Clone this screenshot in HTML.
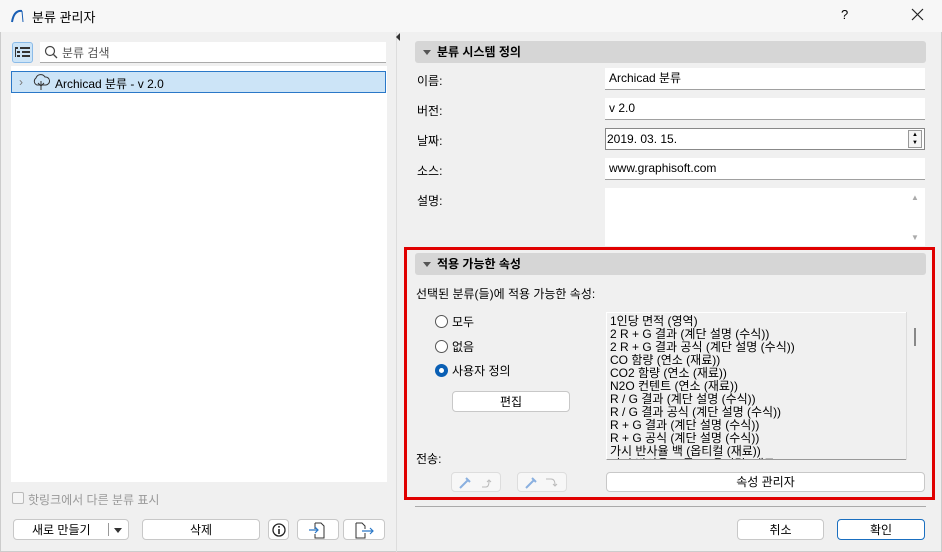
<!DOCTYPE html>
<html><head><meta charset="utf-8"><style>
*{box-sizing:border-box;margin:0;padding:0}
body{width:942px;height:552px;background:#f0f0f0;font-family:"Liberation Sans","Noto Sans CJK KR",sans-serif;font-size:12px;color:#000;position:relative;overflow:hidden}
.a{position:absolute}
.btn{position:absolute;background:#fff;border:1px solid #c8c8c8;border-radius:4px;text-align:center;line-height:20px;font-size:12px}
.inp{position:absolute;background:#fff;border-bottom:1px solid #a0a0a0;height:22px;line-height:21px;padding-left:4px;font-size:12px}
.hdr{position:absolute;background:#d6d6d6;border-radius:3px;height:22px;line-height:22px;font-weight:bold;padding-left:22px;font-size:12px}
.hdr:before{content:"";position:absolute;left:8px;top:9px;border-left:4px solid transparent;border-right:4px solid transparent;border-top:5px solid #555}
.lbl{position:absolute;font-size:12px}
.rad{position:absolute;width:13px;height:13px;border:1px solid #555;border-radius:50%;background:#fff}
.list div{height:13px;line-height:13px;white-space:nowrap}
</style></head><body>
<div class="a" style="left:0;top:0;width:942px;height:32px;background:#f7f7f7"></div>
<svg class="a" style="left:10px;top:8px" width="16" height="16"><path d="M2 14 Q4 2 12 3" stroke="#1a5fb4" stroke-width="2" fill="none"/><path d="M12 3 L13 14" stroke="#1a5fb4" stroke-width="1" fill="none"/></svg>
<div class="a" style="left:32px;top:7px;font-size:13px">분류 관리자</div>
<div class="a" style="left:841px;top:7px;font-size:13px">?</div>
<svg class="a" style="left:911px;top:8px" width="13" height="13"><path d="M1 1L12 12M12 1L1 12" stroke="#222" stroke-width="1.2"/></svg>
<div class="a" style="left:0;top:32px;width:942px;height:520px;background:#f0f0f0;border:1px solid #ccc;border-top:none"></div>
<!-- left -->
<div class="a" style="left:12px;top:42px;width:21px;height:21px;border:1px solid #8bbbe8;background:#cce4f7;border-radius:3px"></div>
<svg class="a" style="left:14px;top:45px" width="17" height="15"><g fill="#333"><rect x="1" y="2" width="3" height="2"/><rect x="6" y="2" width="10" height="2"/><rect x="3" y="6" width="3" height="2"/><rect x="8" y="6" width="8" height="2"/><rect x="3" y="10" width="3" height="2"/><rect x="8" y="10" width="8" height="2"/><rect x="1" y="4" width="1" height="8"/></g></svg>
<div class="a" style="left:40px;top:42px;width:346px;height:21px;background:#fff;border-bottom:1px solid #aaa"></div>
<svg class="a" style="left:44px;top:45px" width="14" height="14"><circle cx="6" cy="6" r="4.5" stroke="#444" fill="none" stroke-width="1.2"/><path d="M9.5 9.5L13 13" stroke="#444" stroke-width="1.3"/></svg>
<div class="a" style="left:62px;top:44px;color:#555">분류 검색</div>
<div class="a" style="left:11px;top:66px;width:376px;height:416px;background:#fff"></div>
<div class="a" style="left:11px;top:71px;width:375px;height:22px;background:#cce4f7;border:1px solid #2a78c8"></div>
<div class="a" style="left:19px;top:75px;color:#777">›</div>
<svg class="a" style="left:32px;top:73px" width="18" height="18"><path d="M5 12 A4 4 0 0 1 4 5 A5 5 0 0 1 13 4 A4 4 0 0 1 14 12 Z M9 8V17 M6 10l3 3 3-3" stroke="#333" fill="none" stroke-width="1"/></svg>
<div class="a" style="left:55px;top:75px">Archicad 분류 - v 2.0</div>
<div class="a" style="left:12px;top:492px;width:12px;height:12px;border:1px solid #bbb;background:#f5f5f5;border-radius:2px"></div>
<div class="a" style="left:28px;top:491px;color:#999">핫링크에서 다른 분류 표시</div>
<div class="btn" style="left:13px;top:519px;width:116px;height:21px;text-align:left;padding-left:18px">새로 만들기</div>
<div class="a" style="left:108px;top:523px;width:1px;height:13px;background:#999"></div>
<div class="a" style="left:114px;top:528px;border-left:4px solid transparent;border-right:4px solid transparent;border-top:5px solid #333"></div>
<div class="btn" style="left:142px;top:519px;width:118px;height:21px">삭제</div>
<div class="btn" style="left:268px;top:519px;width:21px;height:21px"></div>
<svg class="a" style="left:272px;top:523px" width="14" height="14"><circle cx="7" cy="7" r="6" stroke="#222" fill="none" stroke-width="1.3"/><rect x="6.2" y="6" width="1.6" height="5" fill="#222"/><rect x="6.2" y="3" width="1.6" height="1.6" fill="#222"/></svg>
<div class="btn" style="left:297px;top:519px;width:42px;height:21px"></div>
<svg class="a" style="left:308px;top:521px" width="20" height="18"><path d="M7 2h6l3 3v12H7v-4M7 8V2" stroke="#333" fill="none"/><path d="M1 9h9M7 6l3 3-3 3" stroke="#2a78c8" fill="none" stroke-width="1.2"/></svg>
<div class="btn" style="left:343px;top:519px;width:42px;height:21px"></div>
<svg class="a" style="left:354px;top:521px" width="22" height="18"><path d="M2 2h6l3 3v3M11 12v5H2V2" stroke="#333" fill="none"/><path d="M8 10h11M16 7l3 3-3 3" stroke="#2a78c8" fill="none" stroke-width="1.2"/></svg>
<!-- divider -->
<div class="a" style="left:396px;top:32px;width:1px;height:520px;background:#ddd"></div>
<div class="a" style="left:396px;top:33px;border-top:4px solid transparent;border-bottom:4px solid transparent;border-right:4px solid #333"></div>
<!-- right -->
<div class="hdr" style="left:415px;top:41px;width:511px">분류 시스템 정의</div>
<div class="lbl" style="left:417px;top:72px">이름:</div>
<div class="inp" style="left:605px;top:68px;width:320px">Archicad 분류</div>
<div class="lbl" style="left:417px;top:102px">버전:</div>
<div class="inp" style="left:605px;top:98px;width:320px">v 2.0</div>
<div class="lbl" style="left:417px;top:132px">날짜:</div>
<div class="inp" style="left:605px;top:128px;width:320px;border:1px solid #888;padding-left:1px">2019. 03. 15.</div>
<div class="a" style="left:908px;top:130px;width:14px;height:18px;border:1px solid #999;background:#f4f4f4;font-size:6px;line-height:8px;text-align:center">▲<br>▼</div>
<div class="lbl" style="left:417px;top:162px">소스:</div>
<div class="inp" style="left:605px;top:158px;width:320px">www.graphisoft.com</div>
<div class="lbl" style="left:417px;top:192px">설명:</div>
<div class="a" style="left:605px;top:188px;width:320px;height:58px;background:#fff"></div>
<div class="a" style="left:911px;top:193px;font-size:8px;color:#aaa">▲</div>
<div class="a" style="left:911px;top:233px;font-size:8px;color:#aaa">▼</div>
<!-- red box -->
<div class="a" style="left:404px;top:247px;width:531px;height:253px;border:3px solid #e00000"></div>
<div class="hdr" style="left:415px;top:253px;width:511px">적용 가능한 속성</div>
<div class="lbl" style="left:416px;top:285px">선택된 분류(들)에 적용 가능한 속성:</div>
<div class="rad" style="left:435px;top:315px"></div><div class="lbl" style="left:452px;top:313px">모두</div>
<div class="rad" style="left:435px;top:340px"></div><div class="lbl" style="left:452px;top:338px">없음</div>
<div class="rad" style="left:435px;top:364px;border:4px solid #0a5fb4"></div><div class="lbl" style="left:452px;top:362px">사용자 정의</div>
<div class="btn" style="left:452px;top:391px;width:118px;height:21px">편집</div>
<div class="lbl" style="left:416px;top:450px">전송:</div>
<div class="a" style="left:606px;top:312px;width:319px;height:148px;background:#f0f0f0;border:1px solid #fff;border-bottom:1px solid #999;overflow:hidden"></div>
<div class="a" style="left:906px;top:312px;width:19px;height:148px;background:#f0f0f0;border-left:1px solid #ddd"></div>
<div class="a" style="left:914px;top:328px;width:2px;height:18px;background:#888"></div>
<div class="a list" style="left:610px;top:315px;width:296px;height:144px;overflow:hidden">
<div>1인당 면적 (영역)</div><div>2 R + G 결과 (계단 설명 (수식))</div><div>2 R + G 결과 공식 (계단 설명 (수식))</div><div>CO 함량 (연소 (재료))</div><div>CO2 함량 (연소 (재료))</div><div>N2O 컨텐트 (연소 (재료))</div><div>R / G 결과 (계단 설명 (수식))</div><div>R / G 결과 공식 (계단 설명 (수식))</div><div>R + G 결과 (계단 설명 (수식))</div><div>R + G 공식 (계단 설명 (수식))</div><div>가시 반사율 백 (옵티컬 (재료))</div><div>가시 반사율 프론트 (옵티컬 (재료))</div></div>
<div class="btn" style="left:451px;top:472px;width:50px;height:20px;border-color:#ddd;background:#f7f7f7"></div>
<svg class="a" style="left:458px;top:474px" width="36" height="16"><path d="M2 14l8-8M8 4l4 4" stroke="#8ab0e0" stroke-width="2" fill="none"/><path d="M24 13h4q3 0 3-6M29 8l2-2 2 2" stroke="#bbb" fill="none"/></svg>
<div class="btn" style="left:517px;top:472px;width:50px;height:20px;border-color:#ddd;background:#f7f7f7"></div>
<svg class="a" style="left:524px;top:474px" width="36" height="16"><path d="M2 14l8-8M8 4l4 4" stroke="#8ab0e0" stroke-width="2" fill="none"/><path d="M22 5h5q4 0 4 6M29 10l2 2 2-2" stroke="#bbb" fill="none"/></svg>
<div class="btn" style="left:606px;top:472px;width:319px;height:20px;line-height:18px">속성 관리자</div>
<div class="a" style="left:415px;top:506px;width:511px;height:1px;background:#aaa"></div>
<div class="btn" style="left:737px;top:519px;width:87px;height:21px">취소</div>
<div class="btn" style="left:837px;top:519px;width:88px;height:21px;border-color:#1a6fc0">확인</div>
</body></html>
